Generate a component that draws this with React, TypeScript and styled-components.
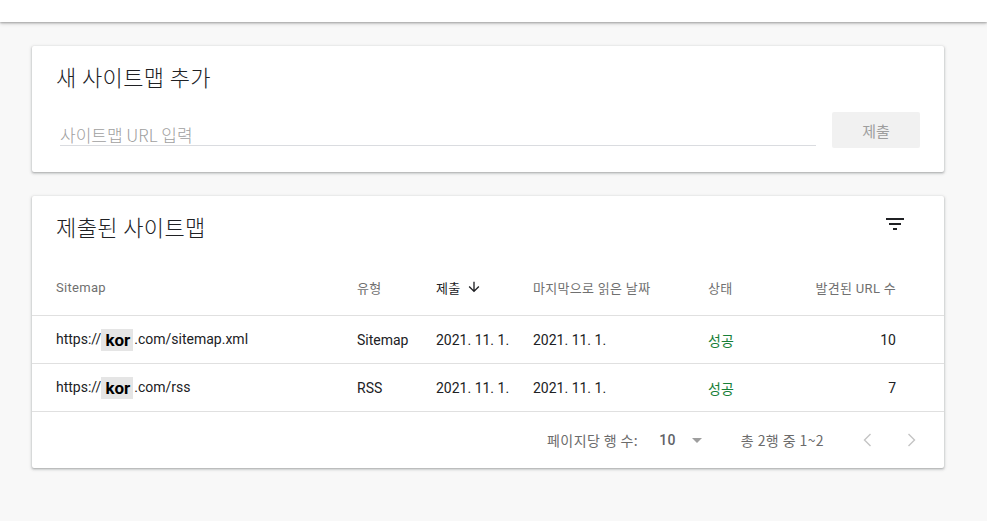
import styled, { createGlobalStyle } from "styled-components";

const GlobalStyle = createGlobalStyle`
  html, body {
    margin: 0;
    padding: 0;
    background: #f8f8f8;
    font-family: Roboto, "Noto Sans CJK KR", "Noto Sans", sans-serif;
    color: #202124;
  }
`;

const TopBar = styled.div`
  height: 22px;
  background: #fff;
  box-shadow: 0 1px 2px rgba(0, 0, 0, 0.28), 0 2px 4px rgba(0, 0, 0, 0.12);
`;

const Page = styled.main`
  padding: 24px 0 52px 32px;
  display: flex;
  flex-direction: column;
  gap: 24px;
`;

const Card = styled.section`
  width: 912px;
  background: #fff;
  border-radius: 2px;
  box-shadow: 0 1px 2px rgba(60, 64, 67, 0.3), 0 1px 3px 1px rgba(60, 64, 67, 0.15);
`;

const CardTitle = styled.h2`
  margin: 0;
  font-family: "Noto Sans CJK KR", sans-serif;
  font-weight: 300;
  font-size: 22px;
  letter-spacing: 0.4px;
  line-height: 28px;
  color: #202124;
`;

const AddBody = styled.div`
  padding: 16px 24px 24px 24px;
`;

const InputRow = styled.div`
  display: flex;
  align-items: flex-start;
  gap: 16px;
  margin-top: 22px;
  padding-left: 4px;
`;

const UrlInput = styled.input`
  flex: 1;
  box-sizing: border-box;
  height: 34px;
  padding: 11px 0 0;
  border: none;
  border-bottom: 1px solid #dadce0;
  outline: none;
  font-family: "Noto Sans CJK KR", Roboto, sans-serif;
  font-weight: 300;
  font-size: 17px;
  line-height: 20px;
  background: transparent;

  &::placeholder {
    color: #a0a0a0;
  }
`;

const SubmitButton = styled.button`
  width: 88px;
  height: 36px;
  border: none;
  border-radius: 2px;
  background: #f1f1f1;
  color: #9e9e9e;
  font-family: "Noto Sans CJK KR", sans-serif;
  font-size: 15px;
`;

const TableHead = styled.div`
  display: flex;
  align-items: center;
  justify-content: space-between;
  height: 60px;
  padding: 0 29px 0 24px;
  box-sizing: border-box;
`;

const IconButton = styled.button`
  width: 40px;
  height: 40px;
  display: flex;
  align-items: center;
  justify-content: center;
  border: none;
  background: none;
  padding: 0;
  margin-top: -4px;
  color: #202124;
`;

const Row = styled.div<{ $height: number; $offset?: number }>`
  display: grid;
  grid-template-columns: 301px 79px 97px 175px 80px 1fr;
  align-items: center;
  height: ${({ $height }) => $height}px;
  padding: ${({ $offset = 0 }) => `${$offset}px 48px 0 24px`};
  border-bottom: 1px solid #e0e0e0;
  box-sizing: border-box;
`;

const HeadCell = styled.div<{ $active?: boolean; $right?: boolean }>`
  display: flex;
  align-items: center;
  justify-content: ${({ $right }) => ($right ? "flex-end" : "flex-start")};
  gap: 5px;
  font-family: Roboto, "Noto Sans CJK KR", sans-serif;
  font-size: 13px;
  letter-spacing: 0.3px;
  color: ${({ $active }) => ($active ? "#202124" : "#707070")};
`;

const Cell = styled.div<{ $right?: boolean; $success?: boolean }>`
  font-family: Roboto, "Noto Sans CJK KR", sans-serif;
  font-size: 14px;
  text-align: ${({ $right }) => ($right ? "right" : "left")};
  color: ${({ $success }) => ($success ? "#188038" : "#202124")};
  white-space: nowrap;
`;

const Masked = styled.span`
  display: inline-block;
  margin: 0 1px 0 0;
  padding: 0 3px 0 4px;
  background: #e5e5e5;
  color: #000;
  font-weight: 700;
  font-size: 17px;
  line-height: 22px;
  vertical-align: middle;
`;

const Footer = styled.div`
  display: flex;
  align-items: center;
  justify-content: flex-end;
  height: 56px;
  padding-right: 21px;
  font-family: "Noto Sans CJK KR", Roboto, sans-serif;
  font-size: 14px;
  letter-spacing: 0.4px;
  color: #6b6b6b;
`;

const PerPage = styled.span`
  margin-left: 21px;
  font-family: Roboto, sans-serif;
  font-weight: 500;
  font-size: 14px;
  color: #5f6368;
`;

const RangeText = styled.span`
  margin-left: 32px;
  margin-right: 32px;
`;

const Pager = styled.div`
  display: flex;
  gap: 19px;
`;

const FilterIcon = () => (
  <svg width="24" height="24" viewBox="0 0 24 24" fill="currentColor">
    <path d="M10 18h4v-2h-4v2zM3 6v2h18V6H3zm3 7h12v-2H6v2z" />
  </svg>
);

const ArrowDown = () => (
  <svg width="16" height="16" viewBox="0 0 24 24" fill="#202124">
    <path d="M20 12l-1.41-1.41L13 16.17V4h-2v12.17l-5.58-5.59L4 12l8 8 8-8z" />
  </svg>
);

const DropIcon = () => (
  <svg width="24" height="24" viewBox="0 0 24 24" fill="#9e9e9e" style={{ marginLeft: 9 }}>
    <path d="M7 10l5 5 5-5z" />
  </svg>
);

const Chevron = ({ left }: { left?: boolean }) => (
  <svg width="24" height="24" viewBox="0 0 24 24" fill="none" stroke="#c4c4c4" strokeWidth="1.4">
    <polyline points={left ? "14.5,6 8.5,12 14.5,18" : "9.5,6 15.5,12 9.5,18"} />
  </svg>
);

interface SitemapRow {
  path: string;
  type: string;
  submitted: string;
  lastRead: string;
  status: string;
  urls: number;
}

const rows: SitemapRow[] = [
  { path: ".com/sitemap.xml", type: "Sitemap", submitted: "2021. 11. 1.", lastRead: "2021. 11. 1.", status: "성공", urls: 10 },
  { path: ".com/rss", type: "RSS", submitted: "2021. 11. 1.", lastRead: "2021. 11. 1.", status: "성공", urls: 7 },
];

export default function App() {
  return (
    <>
      <GlobalStyle />
      <TopBar />
      <Page>
        <Card>
          <AddBody>
            <CardTitle>새 사이트맵 추가</CardTitle>
            <InputRow>
              <UrlInput placeholder="사이트맵 URL 입력" />
              <SubmitButton>제출</SubmitButton>
            </InputRow>
          </AddBody>
        </Card>

        <Card>
          <TableHead>
            <CardTitle>제출된 사이트맵</CardTitle>
            <IconButton>
              <FilterIcon />
            </IconButton>
          </TableHead>

          <Row $height={60} $offset={3}>
            <HeadCell>Sitemap</HeadCell>
            <HeadCell>유형</HeadCell>
            <HeadCell $active>
              제출 <ArrowDown />
            </HeadCell>
            <HeadCell>마지막으로 읽은 날짜</HeadCell>
            <HeadCell>상태</HeadCell>
            <HeadCell $right>발견된 URL 수</HeadCell>
          </Row>

          {rows.map((row) => (
            <Row $height={48} key={row.path}>
              <Cell>
                https://<Masked>kor</Masked>
                {row.path}
              </Cell>
              <Cell>{row.type}</Cell>
              <Cell>{row.submitted}</Cell>
              <Cell>{row.lastRead}</Cell>
              <Cell $success>{row.status}</Cell>
              <Cell $right>{row.urls}</Cell>
            </Row>
          ))}

          <Footer>
            <span>페이지당 행 수:</span>
            <PerPage>10</PerPage>
            <DropIcon />
            <RangeText>총 2행 중 1~2</RangeText>
            <Pager>
              <Chevron left />
              <Chevron />
            </Pager>
          </Footer>
        </Card>
      </Page>
    </>
  );
}
